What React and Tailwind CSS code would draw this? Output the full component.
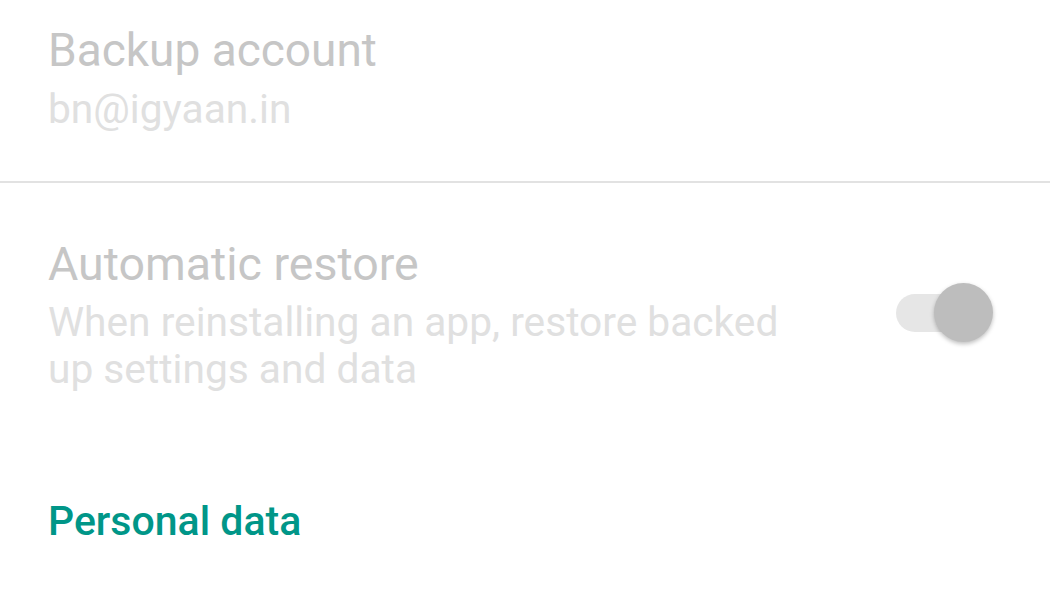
import React from "react";

const Toggle = () => (
  <div className="relative mt-[47px] w-[98px] h-[60px] flex items-center">
    <div className="ml-[1px] w-[80px] h-[38px] rounded-full bg-[#e6e6e6]" />
    <div className="absolute right-0 top-0 w-[59px] h-[59px] rounded-full bg-[#bdbdbd] shadow-[0_2px_4px_rgba(0,0,0,0.25)]" />
  </div>
);

export default function App() {
  return (
    <div className="w-[1050px] h-[600px] bg-white overflow-hidden font-['Roboto',sans-serif]">
      {/* Backup account */}
      <div className="pl-12 pt-[22px] h-[181px]">
        <p className="text-[46px] leading-[56px] text-[#c6c6c6]">Backup account</p>
        <p className="text-[40.7px] leading-[62px] text-[#e0e0e0]">bn@igyaan.in</p>
      </div>
      <div className="h-[2px] bg-[#e2e2e2]" />

      {/* Automatic restore */}
      <div className="flex items-start pl-12 pr-[57px] pt-[53px]">
        <div className="flex-1">
          <p className="text-[46.5px] leading-[56px] text-[#c6c6c6]">Automatic restore</p>
          <p className="mt-[7px] w-[760px] text-[40.7px] leading-[47px] text-[#e0e0e0]">
            When reinstalling an app, restore backed up settings and data
          </p>
        </div>
        <Toggle />
      </div>

      {/* Personal data */}
      <div className="pl-12 pt-[103px]">
        <p className="text-[41px] leading-[50px] font-medium text-[#009688]">Personal data</p>
      </div>
    </div>
  );
}
